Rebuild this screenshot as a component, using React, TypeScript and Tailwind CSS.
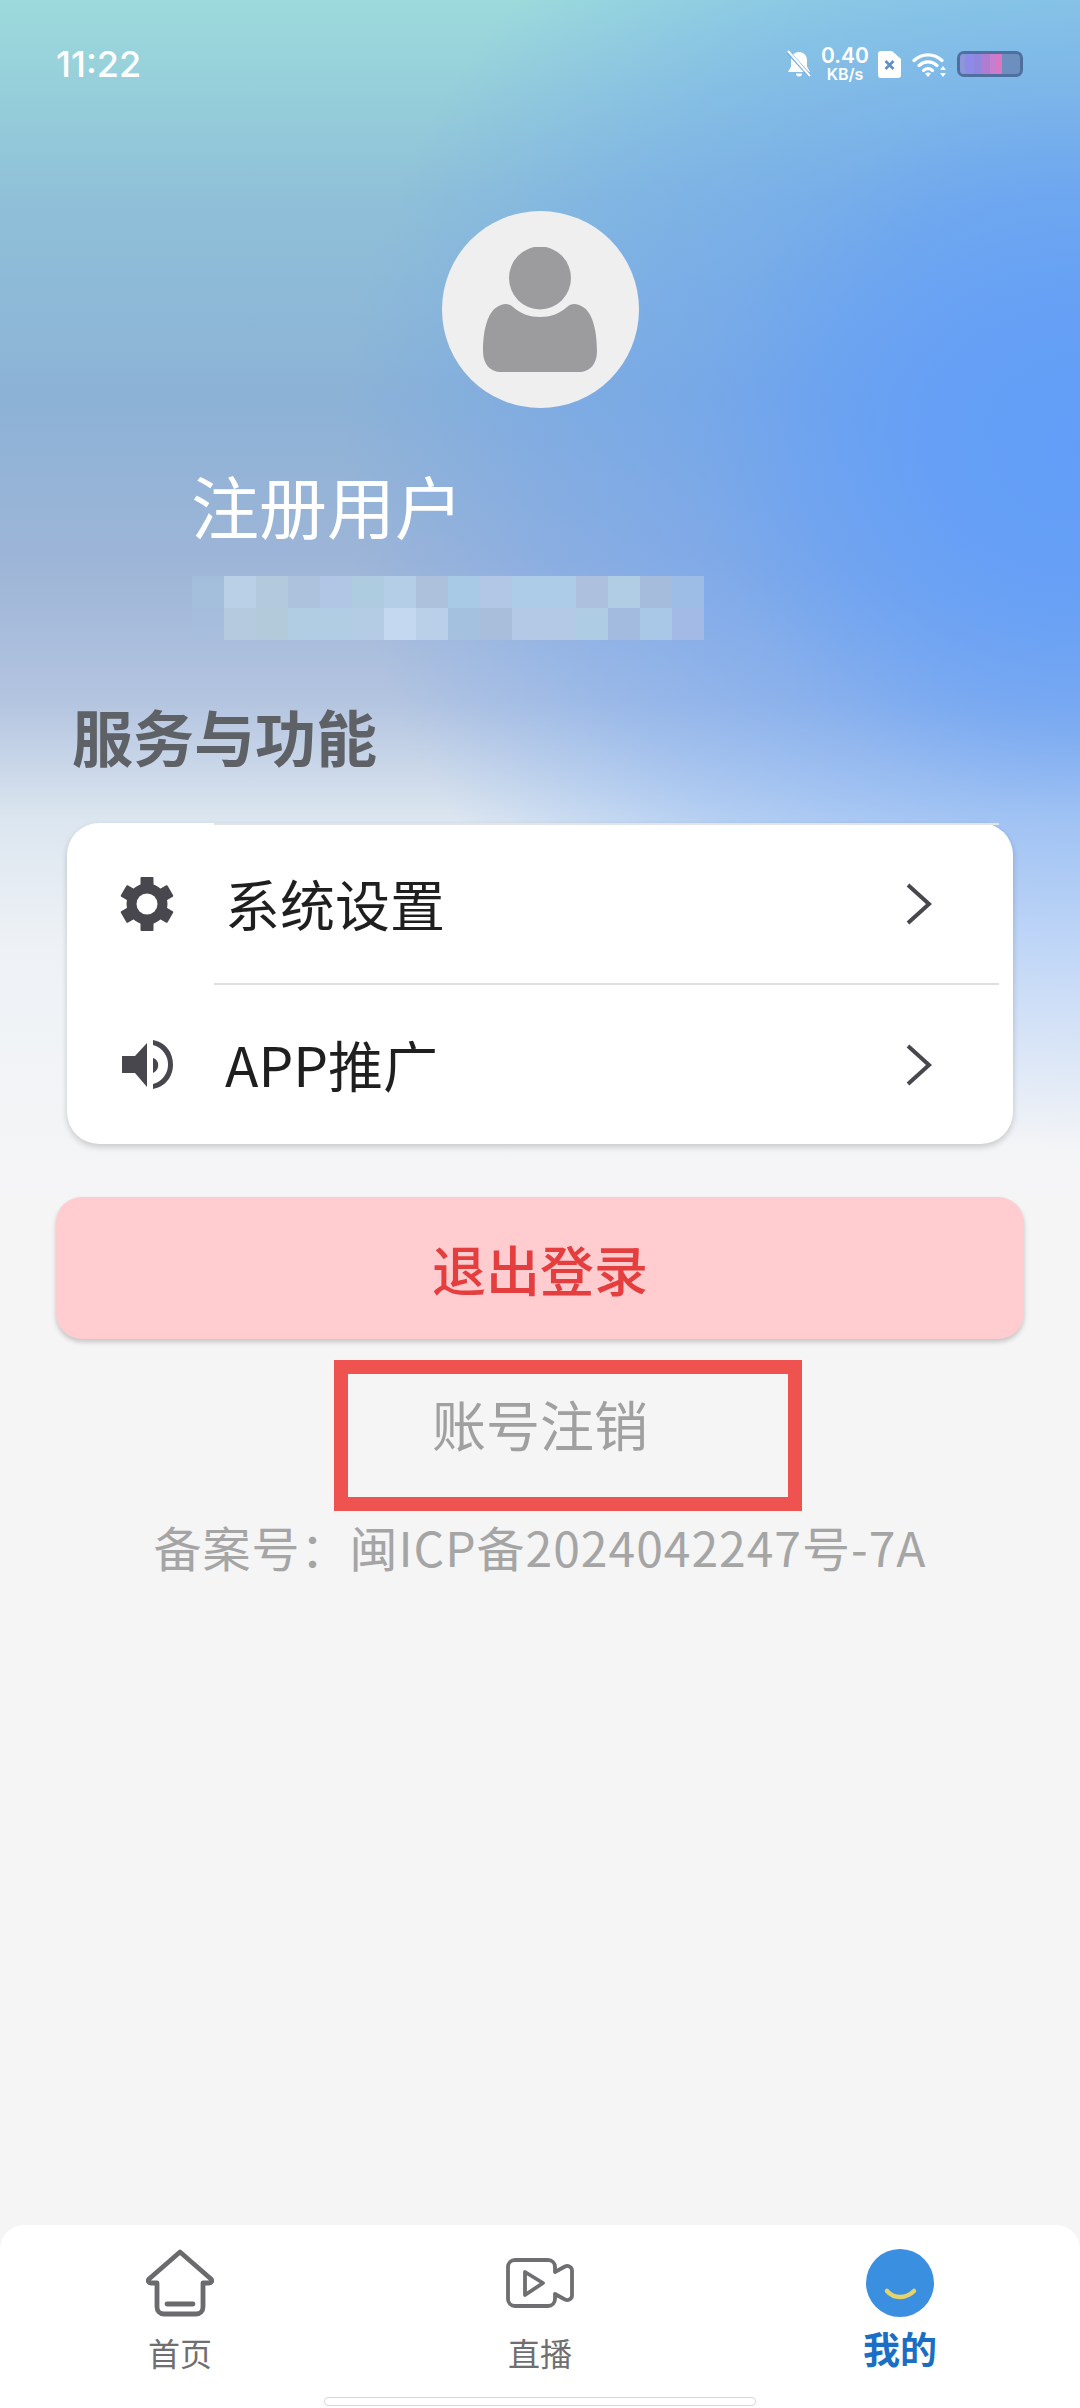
import React from "react";

const cjk = "font-['Noto_Sans_CJK_SC','Noto_Sans',sans-serif]";

const row1 = ["bg-[#a5c3de]/60","bg-[#b9d0e6]","bg-[#b3c9dc]","bg-[#adc2dc]","bg-[#b1c6e4]","bg-[#aecce0]","bg-[#b3cee6]","bg-[#aec1dc]","bg-[#a9cae6]","bg-[#b2c6e6]","bg-[#accce8]","bg-[#accce8]","bg-[#adc0de]","bg-[#b1cde4]","bg-[#a6bcdc]","bg-[#9dbde6]"];
const row2 = ["bg-[#a7bedd]/60","bg-[#b5cadf]","bg-[#b3cadb]","bg-[#b1cde4]","bg-[#b1cde4]","bg-[#b4cde5]","bg-[#c4d9f0]","bg-[#bad0e8]","bg-[#a4c2df]","bg-[#a9bedb]","bg-[#b3c9e6]","bg-[#b3c9e6]","bg-[#aecce4]","bg-[#a3bbde]","bg-[#a9c7e6]","bg-[#a3b9e6]"];

function Bell() {
  return (
    <svg viewBox="0 0 24 28" className="h-[28px] w-[24px]" fill="white">
      <path d="M12 2c5 0 8 3.600 8 8.500v6l3 5.500H1l3-5.500v-6C4 5.600 7 2 12 2z" />
      <path d="M9 23.500h6a3 3 0 0 1-6 0z" />
      <path d="M1 2l22 24" stroke="#74aee2" strokeWidth="4" />
      <path d="M1 1l22 25" stroke="white" strokeWidth="2" />
    </svg>
  );
}

function Sim() {
  return (
    <svg viewBox="0 0 23 27" className="h-[27px] w-[23px]">
      <path d="M4 0h10l9 8v16a3 3 0 0 1-3 3H3a3 3 0 0 1-3-3V3a3 3 0 0 1 3-3z" fill="white" />
      <path d="M7.500 10l8 8M15.500 10l-8 8" stroke="#5f8fc4" strokeWidth="2.600" />
    </svg>
  );
}

function Wifi() {
  return (
    <svg viewBox="0 0 35 26" className="h-[26px] w-[35px]" fill="none" stroke="white" strokeWidth="3.200" strokeLinecap="round">
      <path d="M2 9.500C10 2 22 2 30 9.500" />
      <path d="M7 14.500c5.500-4.800 12.500-4.800 18 0" />
      <path d="M11.500 19.500c3-2.500 6-2.500 9 0" />
      <path d="M16 26l-3-3.500c2-1.200 4-1.200 6 0z" fill="white" stroke="none" />
      <path d="M31 15l-3 4h6zM31 26l-3-4h6z" fill="white" stroke="none" />
    </svg>
  );
}

function Battery() {
  return (
    <div className="flex h-[26px] w-[66px] overflow-hidden rounded-[7px] border-[3px] border-[#4f6f9e] bg-[#6c8fbf]">
      <div className="w-[5px] bg-[#8b97d8]" />
      <div className="w-[9px] bg-[#8c8ce8]" />
      <div className="w-[7px] bg-[#8f86dd]" />
      <div className="w-[9px] bg-[#b07ccf]" />
      <div className="w-[5px] bg-[#c47fd0]" />
      <div className="w-[7px] bg-[#d878c4]" />
    </div>
  );
}

function Gear() {
  return (
    <svg viewBox="0 0 54 54" className="h-[54px] w-[54px]" fill="#47474d">
      <rect x="20.500" y="0" width="13" height="54" rx="1" />
      <rect x="20.500" y="0" width="13" height="54" rx="1" transform="rotate(60 27 27)" />
      <rect x="20.500" y="0" width="13" height="54" rx="1" transform="rotate(120 27 27)" />
      <circle cx="27" cy="27" r="20.500" />
      <circle cx="27" cy="27" r="10.500" fill="white" />
    </svg>
  );
}

function Speaker() {
  return (
    <svg viewBox="0 0 51 49" className="h-[49px] w-[51px]" fill="#47474d">
      <path d="M0 16h13L25 3v44L13 33H0z" />
      <path d="M31 18c7 2 7 12 0 15z" />
      <path d="M31 0C46 3 51 15 51 24.500C51 34 46 46 31 49V44C41 41 46 33 46 24.500C46 16 41 8 31 5z" />
    </svg>
  );
}

function Chevron() {
  return (
    <svg viewBox="0 0 26 42" className="h-[42px] w-[26px]" fill="none" stroke="#47474d" strokeWidth="4">
      <path d="M2 2l21 19L2 40" />
    </svg>
  );
}

function Person() {
  return (
    <svg viewBox="0 0 114 125" className="h-[125px] w-[114px]" fill="#9c9b9d">
      <ellipse cx="57" cy="31" rx="31" ry="31.500" />
      <path d="M0 104C0 85 4 66 14 60C20 56 26 56 30 60C38 67 47 70 57 70C67 70 76 67 84 60C88 56 94 56 100 60C110 66 114 85 114 104C114 117 107 125 96 125H18C7 125 0 117 0 104z" />
    </svg>
  );
}

function HomeIcon() {
  return (
    <svg viewBox="0 0 68 68" className="h-[68px] w-[68px]" fill="none" stroke="#6b6a6d" strokeWidth="4.800" strokeLinejoin="round" strokeLinecap="round">
      <path d="M34 3L65 30c1.500 2 .5 4-2 4h-6v24c0 4-3 7-7 7H18c-4 0-7-3-7-7V34H5c-2.500 0-3.500-2-2-4z" />
      <path d="M21 55h26" />
    </svg>
  );
}

function VideoIcon() {
  return (
    <svg viewBox="0 0 68 50" className="h-[50px] w-[68px]" fill="none" stroke="#6f6e71" strokeWidth="3.800" strokeLinejoin="round">
      <path d="M9 2h33c4 0 7 3 7 7v5l10-5.500c3-1.500 7 .5 7 4v25c0 3.500-4 5.500-7 4l-10-5.500v5c0 4-3 7-7 7H9c-4 0-7-3-7-7V9c0-4 3-7 7-7z" />
      <path d="M19 14l18 11-18 12z" />
    </svg>
  );
}

function MeIcon() {
  return (
    <svg viewBox="0 0 68 68" className="h-[68px] w-[68px]">
      <circle cx="34" cy="34" r="34" fill="#3b8fe0" />
      <path d="M21 42c7 8 19 8 27 0" fill="none" stroke="#e6d36a" strokeWidth="4.500" strokeLinecap="round" />
    </svg>
  );
}

function MenuRow({ icon, label, line, tall }: { icon: React.ReactNode; label: string; line?: boolean; tall?: boolean }) {
  return (
    <div className={tall ? "relative flex h-[162px] items-center pl-[53px] pr-[81px]" : "relative flex h-[159px] items-center pl-[53px] pr-[81px]"}>
      <div className="flex w-[54px] justify-center">{icon}</div>
      <span className="ml-[51px] flex-1 pb-[3px] text-[55px] leading-none text-[#1f1f1f]">{label}</span>
      <Chevron />
      {line && <div className="absolute bottom-0 left-[147px] right-[14px] h-[2px] bg-[#e0e0e0]" />}
      {line && <div className="absolute top-0 left-[147px] right-[14px] h-[2px] bg-[#e2e4e8]" />}
    </div>
  );
}

function NavItem({ icon, label, active }: { icon: React.ReactNode; label: string; active?: boolean }) {
  return (
    <div className="flex w-[360px] flex-col items-center">
      <div className="flex h-[80px] items-center justify-center">{icon}</div>
      <span className={active ? "mt-[5px] text-[37px] leading-[40px] font-bold text-[#1a6fc4]" : "mt-[9px] text-[32px] leading-[40px] text-[#6f6e71]"}>{label}</span>
    </div>
  );
}

export default function App() {
  return (
    <div className={`relative h-[2408px] w-[1080px] overflow-hidden bg-[#f5f5f6] ${cjk}`}>
      <div className="absolute inset-x-0 top-0 h-[1300px] bg-[linear-gradient(180deg,#9cdadc_0px,#8fc0d8_200px,#8cb2d6_400px,#9db5d7_560px,#b3c4e0_700px,#dce6f0_820px,#eef2f6_950px,#f5f5f6_1200px)]" />
      <div className="absolute inset-x-0 top-0 h-[1300px] bg-[radial-gradient(ellipse_760px_720px_at_1080px_450px,rgba(98,158,248,1)_0%,rgba(98,158,248,0.92)_20%,rgba(98,158,248,0.75)_35%,rgba(98,158,248,0.5)_50%,rgba(98,158,248,0.32)_70%,rgba(98,158,248,0)_97%)]" />

      <div className="relative flex h-full flex-col">
        <div className="flex h-[48px] shrink-0 items-start justify-between pl-[56px] pr-[57px] pt-[46px]">
          <span className="font-['Inter','Noto_Sans',sans-serif] text-[36px] leading-[36px] font-medium text-white">11:22</span>
          <div className="flex items-center">
            <Bell />
            <div className="ml-[11px] flex w-[46px] flex-col items-center font-['Inter','Noto_Sans',sans-serif] font-semibold text-white">
              <span className="text-[21px] leading-[20px]">0.40</span>
              <span className="text-[16px] leading-[16px]">KB/s</span>
            </div>
            <div className="ml-[10px]"><Sim /></div>
            <div className="ml-[11px]"><Wifi /></div>
            <div className="ml-[10px]"><Battery /></div>
          </div>
        </div>

        <div className="mt-[163px] flex h-[197px] w-[197px] shrink-0 items-center justify-center self-center rounded-full bg-[#f0eff0]">
          <Person />
        </div>

        <div className="mt-[58px] pl-[191px] text-[68px] leading-[78px] text-white">注册用户</div>

        <div className="ml-[192px] mt-[32px] grid h-[64px] w-[512px] shrink-0 grid-cols-[repeat(16,1fr)] grid-rows-2">
          {row1.map((c, i) => <div key={`a${i}`} className={c} />)}
          {row2.map((c, i) => <div key={`b${i}`} className={c} />)}
        </div>

        <div className="mt-[61px] pl-[72px] text-[61px] leading-[70px] font-bold text-[#5e6266]">服务与功能</div>

        <div className="mx-[67px] mt-[52px] shrink-0 rounded-[32px] bg-white shadow-[0_3px_6px_rgba(0,0,0,0.18)]">
          <MenuRow icon={<Gear />} label="系统设置" line tall />
          <MenuRow icon={<Speaker />} label="APP推广" />
        </div>

        <div className="mx-[56px] mt-[53px] flex h-[142px] shrink-0 items-center justify-center rounded-[26px] bg-[#ffccd0] text-[54px] font-medium text-[#e53e3e] shadow-[0_3px_5px_rgba(0,0,0,0.2)]">
          退出登录
        </div>

        <div className="relative mt-[21px] h-[151px] shrink-0 pt-[29px] text-center text-[54px] leading-[70px] text-[#a0a0a0]">
          账号注销
          <div className="absolute left-[334px] top-0 h-[151px] w-[468px] border-[14px] border-[#ef5350]" />
        </div>

        <div className="mt-[5px] text-center text-[48px] leading-[60px] tracking-[1px] text-[#a5a5a5]">备案号：闽ICP备2024042247号-7A</div>

        <div className="mt-auto flex h-[183px] flex-col items-center rounded-t-[24px] bg-white">
          <div className="flex w-full pt-[18px]">
            <NavItem icon={<HomeIcon />} label="首页" />
            <NavItem icon={<VideoIcon />} label="直播" />
            <NavItem icon={<MeIcon />} label="我的" active />
          </div>
          <div className="mt-auto mb-[2px] h-[9px] w-[432px] rounded-[4px] border border-[#d8d8dc] bg-white" />
        </div>
      </div>
    </div>
  );
}
